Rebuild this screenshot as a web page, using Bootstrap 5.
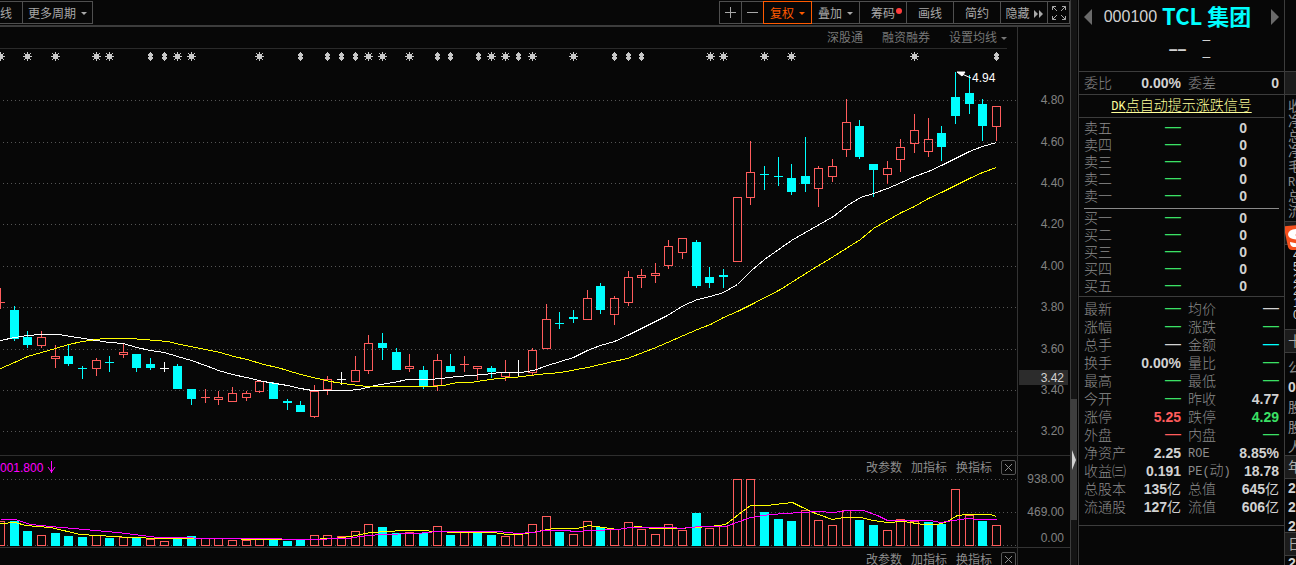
<!DOCTYPE html>
<html lang="zh-CN" data-bs-theme="dark">
<head>
<meta charset="utf-8">
<meta name="viewport" content="width=device-width, initial-scale=1">
<title>000100 TCL 集团</title>
<link href="https://cdn.jsdelivr.net/npm/bootstrap@5.3.0/dist/css/bootstrap.min.css" rel="stylesheet">
<style>
:root{--ink:#070707;--rule:#3c3c3c;--faint:#2a2a2a;--dim:#8c8c8c;--lit:#d2d2d2;--up:#ff5c5c;--down:#3be065;--aqua:#00ffff}
body{background:var(--ink);color:var(--dim);font-family:"Liberation Sans","Noto Sans CJK SC",sans-serif;font-size:12px;line-height:16px}
.min0{min-width:0}
button{font-family:inherit}
.tools{height:27px;border-bottom:2px solid var(--rule);padding-top:1px}
.tool{height:23px;min-width:23px;margin-left:-1px;padding:2px 0 0;background:transparent;border:1px solid #4f4f4f;color:#a8a8a8;font-size:12px;line-height:16px;display:inline-flex;align-items:center;justify-content:center;position:relative}
.tool:first-child{margin-left:0}
.tool.wide{width:48px}
.tool.wider{width:49px}
.tool.period{width:71px}
.tool.hot{border-color:#ff5a00;color:#ff5a00;z-index:1}
.tool.sign{padding:0}
.tri{width:0;height:0;border:3px solid transparent;border-top-color:currentColor;border-bottom:0;margin-left:5px}
.links .tri{margin-left:4px}
.newdot{position:absolute;top:6px;right:4px;width:6px;height:6px;border-radius:50%;background:#ff3c3c}
.links{height:22px;padding-top:1px;margin-right:10px;border-bottom:1px solid var(--faint);gap:19px}
.plainbtn{background:none;border:0;padding:0;color:#777;font-size:12px;line-height:16px;white-space:nowrap}
.plot{border-right:1px solid #333}
.axis{width:52px}
.pricepane{border-bottom:1px solid #2e2e2e}
.volpane{border-bottom:1px solid #333}
.panehead{height:23px;gap:9px}
.panehead .plainbtn{color:#8c8c8c}
.shut{width:15px;height:15px;border:1px solid #555;border-radius:2px;padding:0;background:none;color:#8c8c8c;display:flex;align-items:center;justify-content:center;margin-right:1px}
.signal{color:#f0f}
svg{display:block}
.chart{overflow:visible;flex:none}
.rail{width:8px;background:#141414;border-left:1px solid var(--rule);border-right:1px solid var(--ink)}
.railtop{height:399px}
.thumb{height:121px;background:#3e3e3e}
.quote{width:207px;border-left:1px solid var(--rule);border-right:1px solid var(--rule)}
.namebar{height:34px;padding:0 5px}
.arrow{width:8px;height:16px;background:none;border:0;padding:0}
.naming{gap:5px;padding-right:8px}
.code{font-size:16px;line-height:20px;color:var(--lit)}
.stockname{font:700 22px/28px "Noto Sans CJK SC",sans-serif;color:var(--aqua);padding-bottom:4px}
.lastprice{height:38px;color:var(--lit);gap:16px;padding-left:16px;padding-bottom:6px;border-bottom:1px solid var(--rule)}
.lastprice b{font-size:16px;line-height:16px}
.lastprice div{font-size:14px;line-height:17px;padding-bottom:4px}
.boxline{border-bottom:1px solid var(--rule)}
.grid{width:100%;table-layout:fixed;border-collapse:collapse;font-size:14px;line-height:17px;white-space:nowrap}
.grid th,.grid td{vertical-align:middle}
.grid th{font-weight:300;padding:0 0 2px;line-height:15px;color:var(--dim);font-family:"Noto Sans CJK SC",sans-serif}
.grid td{padding:0;text-align:right;font-weight:700;color:var(--lit)}
.grid td+th{padding-left:7px}
.book th,.book td{height:17px}
.stat th,.stat td{height:18px}
.la{font-family:"Liberation Mono",monospace;font-size:12px;line-height:12px}
.un{font-weight:400;line-height:12px}
.grid .g{color:var(--down)}
.grid .r{color:var(--up)}
.grid .c{color:var(--aqua)}
.grid .d{font-weight:400;font-size:16px;line-height:13px;padding-bottom:4px}
.weibi{height:23px;padding:0 5px}
.weibi th,.weibi td{height:22px}
.signalrow{height:23px;text-align:center}
.signalrow a{color:#ffff99;font-size:14px;line-height:21px;font-weight:300;text-decoration:underline;text-underline-offset:2px}
.sells{padding:2px 5px 3px}
.split{height:1px;background:#8a8a8a;margin:0 5px}
.buys{padding:1px 5px}
.stats{padding:3px 5px 9px}
.more{width:11px;position:relative;font-size:14px;line-height:15px;white-space:nowrap}
.more div{padding-left:3px;overflow:hidden}
.caption{height:24px;background:#1c1c1c;border-top:1px solid var(--rule);border-bottom:1px solid var(--rule);line-height:22px;color:#aaa}
.more .num{color:var(--lit);font-weight:700}
.more .inset{padding-left:8px;font-weight:400}
.brand{position:absolute;left:-1px;top:225px}
.h72{height:71px}.h126{height:126px}.h85{height:84px}.h102{height:102px}.h53{height:53px}
.l20{line-height:20px}.l19{line-height:19px}.l12{line-height:12px;font-size:12px}
</style>
</head>
<body>
<div class="d-flex vh-100 overflow-hidden">
  <main class="flex-fill min0 d-flex flex-column">
    <div class="tools flex-shrink-0 d-flex justify-content-between">
      <div class="d-flex">
        <button class="tool justify-content-start border-start-0" type="button">线</button>
        <button class="tool period" type="button">更多周期<i class="tri"></i></button>
      </div>
      <div class="d-flex">
        <button class="tool sign" type="button" aria-label="放大"><svg width="11" height="11" stroke="currentColor"><path d="M5.500 0V11M0 5.500H11"/></svg></button>
        <button class="tool sign" type="button" aria-label="缩小"><svg width="11" height="11" stroke="currentColor"><path d="M0 5.500H11"/></svg></button>
        <button class="tool wider hot" type="button">复权<i class="tri"></i></button>
        <button class="tool wider" type="button">叠加<i class="tri"></i></button>
        <button class="tool wide" type="button">筹码<i class="newdot"></i></button>
        <button class="tool wide" type="button">画线</button>
        <button class="tool wide" type="button">简约</button>
        <button class="tool wide" type="button">隐藏<svg class="ms-1" width="9" height="8" fill="currentColor"><path d="M0 0L4 4L0 8ZM5 0L9 4L5 8Z"/></svg></button>
        <button class="tool sign" type="button" aria-label="全屏"><svg width="14" height="14" fill="none" stroke="currentColor"><path d="M.5 4V.5H4M.5.5L5 5M10 .5H13.500V4M13.500.5L9 5M.5 10V13.500H4M.5 13.500L5 9M10 13.500H13.500V10M13.500 13.500L9 9"/></svg></button>
      </div>
    </div>
    <section class="pricepane flex-shrink-0 d-flex">
      <div class="plot flex-fill min0 overflow-hidden">
        <div class="links d-flex justify-content-end align-items-center">
          <button class="plainbtn" type="button">深股通</button>
          <button class="plainbtn" type="button">融资融券</button>
          <button class="plainbtn d-flex align-items-center" type="button">设置均线<i class="tri"></i></button>
        </div>
        <div class="d-flex justify-content-end"><svg id="price" class="chart" width="1017" height="406" viewBox="0 49 1017 406" role="img" aria-label="K线图"></svg></div>
      </div>
      <svg id="priceAxis" class="axis" height="428" viewBox="1018 27 52 428"></svg>
    </section>
    <section class="volpane flex-shrink-0 d-flex">
      <div class="plot flex-fill min0 overflow-hidden">
        <div class="panehead d-flex align-items-center">
          <div class="signal me-auto d-flex align-items-center">001.800<svg class="ms-1" width="9" height="13" stroke="#f0f" fill="#f0f"><path d="M4.500 0V12" /><path d="M1 6L4.500 11L8 6" fill="none"/></svg></div>
          <button class="plainbtn" type="button">改参数</button>
          <button class="plainbtn" type="button">加指标</button>
          <button class="plainbtn" type="button">换指标</button>
          <button class="shut" type="button" aria-label="关闭"><svg width="9" height="9" stroke="currentColor"><path d="M1 1L8 8M8 1L1 8"/></svg></button>
        </div>
        <div class="d-flex justify-content-end"><svg id="volume" class="chart" width="1017" height="68" viewBox="0 479 1017 68" role="img" aria-label="成交量"></svg></div>
      </div>
      <svg id="volAxis" class="axis" height="91" viewBox="1018 456 52 91"></svg>
    </section>
    <section class="d-flex flex-fill overflow-hidden">
      <div class="plot flex-fill min0">
        <div class="panehead d-flex align-items-center justify-content-end">
          <button class="plainbtn" type="button">改参数</button>
          <button class="plainbtn" type="button">加指标</button>
          <button class="plainbtn" type="button">换指标</button>
          <button class="shut" type="button" aria-label="关闭"><svg width="9" height="9" stroke="currentColor"><path d="M1 1L8 8M8 1L1 8"/></svg></button>
        </div>
      </div>
      <div class="axis"></div>
    </section>
  </main>

  <div class="rail flex-shrink-0">
    <div class="railtop"></div>
    <div class="thumb d-flex align-items-center"><svg width="5" height="20" fill="#d2d2d2"><path d="M1 0L5 10L1 20Z"/></svg></div>
  </div>

  <aside class="quote flex-shrink-0">
    <div class="namebar d-flex align-items-center justify-content-between">
      <button class="arrow" type="button" aria-label="上一只"><svg width="8" height="16" fill="#6a6a6a"><path d="M8 0V16L0 8Z"/></svg></button>
      <div class="naming d-flex align-items-center"><span class="code">000100</span><span class="stockname">TCL 集团</span></div>
      <button class="arrow" type="button" aria-label="下一只"><svg width="8" height="16" fill="#6a6a6a"><path d="M0 0V16L8 8Z"/></svg></button>
    </div>
    <div class="lastprice d-flex align-items-center justify-content-center"><b>––</b><div>–<br>–</div></div>
    <div class="weibi boxline"><table class="grid"><colgroup><col style="width:45px"><col style="width:52px"><col style="width:45px"><col></colgroup>
      <tr><th>委比</th><td>0.00%</td><th>委差</th><td>0</td></tr></table></div>
    <div class="signalrow boxline"><a href="#"><span class="la">DK</span>点自动提示涨跌信号</a></div>
    <div class="sells"><table class="grid book"><colgroup><col style="width:45px"><col style="width:52px"><col style="width:66px"><col></colgroup><tbody id="sell"></tbody></table></div>
    <div class="split"></div>
    <div class="buys boxline"><table class="grid book"><colgroup><col style="width:45px"><col style="width:52px"><col style="width:66px"><col></colgroup><tbody id="buy"></tbody></table></div>
    <div class="stats boxline"><table class="grid stat"><colgroup><col style="width:45px"><col style="width:52px"><col style="width:48px"><col></colgroup>
      <tr><th>最新</th><td class="d g">—</td><th>均价</th><td class="d">—</td></tr>
      <tr><th>涨幅</th><td class="d g">—</td><th>涨跌</th><td class="d g">—</td></tr>
      <tr><th>总手</th><td class="d">—</td><th>金额</th><td class="d c">—</td></tr>
      <tr><th>换手</th><td>0.00%</td><th>量比</th><td class="d g">—</td></tr>
      <tr><th>最高</th><td class="d g">—</td><th>最低</th><td class="d g">—</td></tr>
      <tr><th>今开</th><td class="d g">—</td><th>昨收</th><td>4.77</td></tr>
      <tr><th>涨停</th><td class="r">5.25</td><th>跌停</th><td class="g">4.29</td></tr>
      <tr><th>外盘</th><td class="d r">—</td><th>内盘</th><td class="d g">—</td></tr>
      <tr><th>净资产</th><td>2.25</td><th><span class="la">ROE</span></th><td>8.85%</td></tr>
      <tr><th>收益㈢</th><td>0.191</td><th><span class="la">PE(</span>动<span class="la">)</span></th><td>18.78</td></tr>
      <tr><th>总股本</th><td>135<span class="un">亿</span></td><th>总值</th><td>645<span class="un">亿</span></td></tr>
      <tr><th>流通股</th><td>127<span class="un">亿</span></td><th>流值</th><td>606<span class="un">亿</span></td></tr>
    </table></div>
  </aside>

  <aside class="more flex-shrink-0 overflow-hidden">
    <div class="h72"></div>
    <div class="caption"></div>
    <div class="h126 pt-1">收<br>净<br>总<br>净<br>毛<br><span class="la">ROE</span><br>总<br>流</div>
    <div class="caption"></div>
    <div class="h85 l12 num inset pt-1">4<br>5<br>2<br>2<br>1<br>0</div>
    <div class="caption">十</div>
    <div class="h102 l20 pt-1">公<br><span class="num">0</span><br>股<br>股<br>人</div>
    <div class="caption">年</div>
    <div class="h53 l19 num">2<br>2<br>2</div>
    <div class="caption">日</div>
    <div class="num">2</div>
    <svg class="brand" width="16" height="25"><path d="M0 3Q0 1 3 1L16 0V25H8Q5 25 4 22Z" fill="#f5501e"/><path d="M16 4Q5 3 4 9Q4 13 9 14L16 15V12L11 10L16 8ZM6 17L16 19V22H9Q6 21 6 17Z" fill="#fff"/></svg>
  </aside>
</div>

<script src="https://cdn.jsdelivr.net/npm/bootstrap@5.3.0/dist/js/bootstrap.bundle.min.js"></script>
<script>
const COLOR = {r:'#ff5c5c', c:'#00ffff', w:'#ffffff'};
const xAt = i => Math.floor(14.2 + 13.64 * i);

// one entry a day: colour, high, body top, body bottom, low, volume colour, volume top
const days = `r 288 302 303 309 r 521|c 306 310 339 341 c 521|c 331 337 345 348 c 531|r 331 337 346 348 r 535|r 345 356 359 368 c 533|c 345 356 364 366 c 536|c 366 368 369 379 c 537|r 358 360 369 376 r 535|c 356 362 363 372 c 538|r 344 352 355 358 r 537|c 354 354 368 372 c 537|c 358 364 368 370 r 539|w 362 368 369 372 r 541|c 364 366 389 389 c 538|c 389 389 399 405 c 536|r 389 397 398 403 r 538|r 391 397 400 405 r 538|r 387 393 402 402 r 540|r 391 393 398 401 r 540|r 381 381 392 393 r 539|c 382 383 399 399 c 540|c 399 401 403 410 c 541|c 401 405 412 412 c 539|r 385 391 417 418 r 535|r 376 379 390 395 r 535|w 372 379 380 385 r 536|r 356 370 382 382 r 531|r 335 343 371 374 r 524|c 333 343 348 360 c 527|c 348 352 370 370 c 533|r 354 366 369 372 r 532|c 366 370 386 389 c 533|r 354 360 386 391 r 526|c 354 366 372 372 c 535|r 356 364 365 372 r 532|r 366 366 369 380 c 533|c 366 368 372 378 c 535|r 360 372 377 381 r 536|w 360 372 373 377 r 534|r 348 350 373 375 r 524|r 304 319 349 349 r 516|c 312 323 324 329 c 532|c 310 317 319 323 r 534|r 290 298 320 320 r 521|c 283 286 310 314 c 527|r 296 298 315 325 r 529|r 271 277 303 306 r 522|r 269 275 278 288 r 529|r 263 273 276 283 r 534|r 240 246 266 269 r 524|r 238 238 253 259 r 530|c 240 242 286 288 c 513|c 267 277 283 288 r 528|c 269 275 277 288 r 526|r 197 197 262 262 r 479|r 141 172 198 205 r 479|c 166 174 175 190 c 512|c 157 176 177 186 c 519|c 164 178 192 195 c 521|c 137 176 184 192 r 510|r 166 168 189 207 r 520|r 159 166 177 182 r 525|r 99 122 150 157 r 510|c 120 126 157 159 c 520|c 164 164 170 197 c 525|r 161 168 175 184 r 530|r 139 147 160 172 r 519|r 114 130 144 153 r 521|r 118 139 152 157 c 522|c 126 133 147 161 c 524|c 72 97 116 124 r 489|c 75 93 104 114 r 515|c 99 104 126 141 c 521|r 106 106 127 141 r 525`
  .split('|').map((s, k) => { const [t,h,a,b,l,vt,v] = s.split(' '); return {x:xAt(k-1), t, h:+h, a:+a, b:+b, l:+l, vt, v:+v}; });

const maShort = '0,340 14,337 27,335 41,334 58,334 77,337 96,340 109,342 123,343 136,347 150,350 164,352 177,356 191,360 205,365 218,370 232,374 246,377 263,381 287,385 300,388 312,390 347,390 358,389 367,387 375,385 393,382 407,379 430,379 440,378 457,376 483,374 500,372 520,372 533,370 547,365 560,361 573,357 587,350 600,345 614,341 627,335 653,322 667,315 683,305 697,299 710,296 723,292 737,284 751,270 764,259 791,240 805,232 819,224 833,216 847,205 860,197 873,193 887,188 901,182 914,176 928,171 941,165 955,158 969,151 982,146 996,142';
const maLong = '0,368 14,362 27,356 41,352 55,348 68,344 82,341 103,338 130,338 143,339 167,341 180,344 200,348 220,352 233,356 247,359 263,364 277,367 287,370 300,374 317,378 330,381 342,383 358,385 367,386 430,386 443,385 457,382 470,382 483,380 497,378 513,377 530,375 537,374 560,372 587,367 600,364 613,361 627,358 640,353 653,348 667,342 683,335 697,329 710,324 723,317 737,311 753,303 780,289 810,270 833,256 860,239 873,228 887,220 901,212 914,206 928,198 941,192 955,185 969,178 982,172 996,167';
const volShort = '0,523 15,522 25,525 50,527 80,534 97,535 130,537 160,538 227,538 253,539 307,539 333,538 350,536 370,532 403,530 417,530 440,531 453,532 493,532 507,534 520,534 537,531 553,528 577,528 588,525 603,527 617,529 637,526 653,528 677,528 710,526 725,524 750,505 767,505 783,503 792,502 800,506 815,513 832,519 843,517 860,517 873,520 887,522 903,521 923,524 937,524 947,521 957,515 967,514 990,514 996,516';
const volLong = '0,519 15,519 30,524 50,526 73,528 117,532 157,537 227,538 280,538 283,539 307,539 347,538 360,536 380,534 417,533 437,531 497,531 517,533 533,532 543,530 567,530 573,531 593,530 617,529 630,527 673,527 680,528 700,526 725,526 750,517 763,515 770,514 800,512 817,511 833,512 847,510 863,510 877,515 887,520 930,520 940,522 953,520 967,518 977,519 996,519';

const bar = (x, top, bottom, t) => {
  if (t !== 'r' && t !== 'w' || bottom - top < 2) return `<rect x="${x-4}" y="${top}" width="9" height="${bottom-top}" fill="${COLOR[t]}"/>`;
  return `<path d="M${x-3.5} ${top+.5}h8V${bottom-.5}h-8Z" fill="none" stroke="${COLOR[t]}"/>`;
};
const wick = (x, y1, y2, t) => y2 > y1 ? `<rect x="${x}" y="${y1}" width="1" height="${y2-y1}" fill="${COLOR[t]}"/>` : '';
const gridline = y => `<path d="M-2001 ${y+.5}H1017" stroke="#555" stroke-dasharray="1 3"/>`;
const line = (pts, color) => `<polyline points="${pts}" transform="translate(.5 .5)" fill="none" stroke="${color}"/>`;
const crisp = s => `<g shape-rendering="crispEdges">${s}</g>`;

const stars = [0,27,55,96,109,177,191,259,368,382,409,491,505,532,573,710,723,764,791,914];
const diamonds = [150,164,300,327,341,355,437,450,478,518,614,628,641,996];
const block = (x, y, w, h) => `M${x} ${y}h${w}v${h}h${-w}Z`;
const star = x => `<path fill="#c8c8c8" d="${block(x-4,56,9,1)}${block(x,52,1,9)}${block(x-2,54,5,5)}${block(x-3,53,1,1)}${block(x+3,53,1,1)}${block(x-3,59,1,1)}${block(x+3,59,1,1)}"/>`;
const diamond = x => `<path fill="#c8c8c8" d="${block(x,52,1,9)}${block(x-1,53,3,7)}${block(x-2,54,5,2)}${block(x-2,57,5,2)}"/>`;

const priceTicks = [[100,'4.80'],[142,'4.60'],[183,'4.40'],[224,'4.20'],[266,'4.00'],[307,'3.80'],[349,'3.60'],[390,'3.40'],[431,'3.20']];
const label = (y, s, color='#828282') => `<text x="1064" y="${y+4}" text-anchor="end" font-size="12" fill="${color}">${s}</text>`;

document.getElementById('price').innerHTML = crisp(
  priceTicks.map(t => gridline(t[0])).join('') + stars.map(star).join('') + diamonds.map(diamond).join('') +
  days.map(d => wick(d.x, d.h, d.a, d.t) + bar(d.x, d.a, d.b, d.t) + wick(d.x, d.b, d.l, d.t)
    + (d.b - d.a < 2 ? wick(d.x, d.a, d.b, d.t) : '')).join('') +
  line(maShort, '#fff') + line(maLong, '#ff0')) +
  '<path d="M957 72L965 72L962 76ZM962 74L971 78" fill="#fff" stroke="#fff"/><text x="972" y="82" font-size="12" fill="#fff">4.94</text>';
document.getElementById('priceAxis').innerHTML = priceTicks.map(t => label(...t)).join('') +
  '<rect x="1019" y="370" width="49" height="15" fill="#2c2c2c"/>' + label(378, '3.42', '#d2d2d2');
document.getElementById('volume').innerHTML = crisp([479,512,545].map(gridline).join('') +
  days.map(d => bar(d.x, d.v, 546, d.vt)).join('') + line(volShort, '#ff0') + line(volLong, '#f0f'));
document.getElementById('volAxis').innerHTML = label(479,'938.00') + label(512,'469.00') + label(538,'0.00');

const level = name => `<tr><th>${name}</th><td class="d g">—</td><td>0</td><td></td></tr>`;
document.getElementById('sell').innerHTML = ['卖五','卖四','卖三','卖二','卖一'].map(level).join('');
document.getElementById('buy').innerHTML = ['买一','买二','买三','买四','买五'].map(level).join('');
</script>
</body>
</html>
